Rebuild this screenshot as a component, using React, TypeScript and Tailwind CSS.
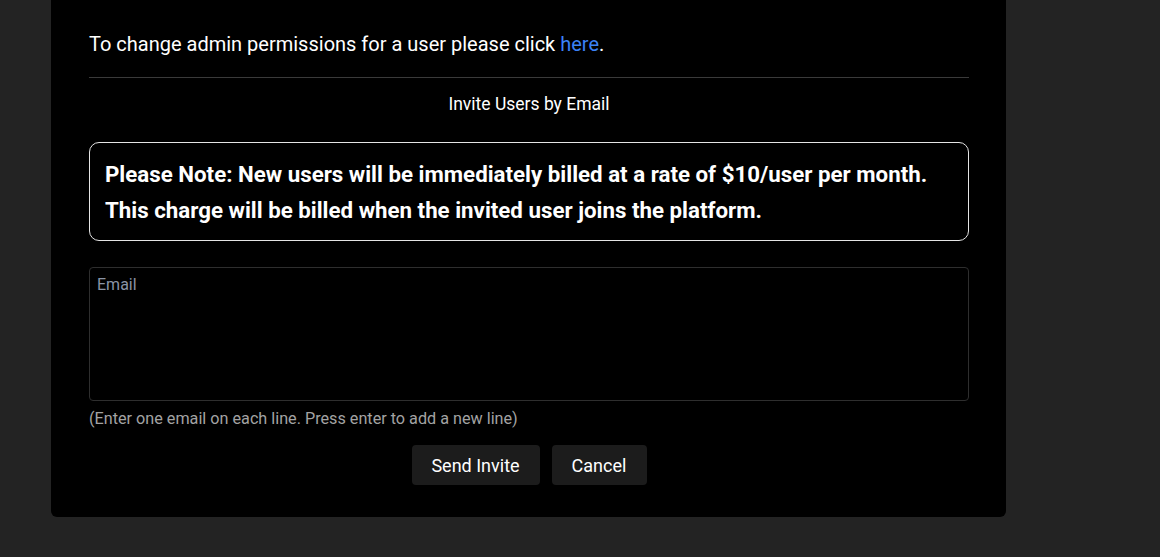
import React from "react";

export default function App() {
  return (
    <div className="min-h-[557px] w-full bg-[#232323]" style={{ fontFamily: "Roboto, 'Liberation Sans', sans-serif" }}>
      <div className="ml-[51px] w-[955px] bg-black rounded-b-[6px] pl-[38px] pr-[37px] pt-[29px] pb-[32px]">
        <p className="text-[20px] leading-[30px] text-white">
          To change admin permissions for a user please click{" "}
          <a className="text-[#3b82f6]" href="#">here</a>.
        </p>
        <div className="mt-[18px] border-t border-[#3a3a3a]" />
        <div className="mt-[15px] text-center text-[17.5px] leading-[22px] text-white">Invite Users by Email</div>
        <div className="mt-[27px] rounded-[10px] border border-[#e5e5e5] px-[15px] pt-[13px] pb-[12px]">
          <p className="text-[22.3px] font-bold leading-[36px] text-white">
            Please Note: New users will be immediately billed at a rate of $10/user per month.
            <br />
            This charge will be billed when the invited user joins the platform.
          </p>
        </div>
        <div className="mt-[26px] h-[134px] rounded-[4px] border border-[#2e2e2e] px-[7px] pt-[5px]">
          <span className="text-[16px] leading-[20px] text-[#8a94a6]">Email</span>
        </div>
        <p className="mt-[8px] text-[16.2px] leading-[20px] text-[#a3a3a3]">
          (Enter one email on each line. Press enter to add a new line)
        </p>
        <div className="mt-[16px] flex justify-center gap-[12px]">
          <button className="h-[40px] w-[128px] rounded-[4px] bg-[#1c1c1c] text-[18px] text-white">Send Invite</button>
          <button className="h-[40px] w-[95px] rounded-[4px] bg-[#1c1c1c] text-[18px] text-white">Cancel</button>
        </div>
      </div>
    </div>
  );
}
